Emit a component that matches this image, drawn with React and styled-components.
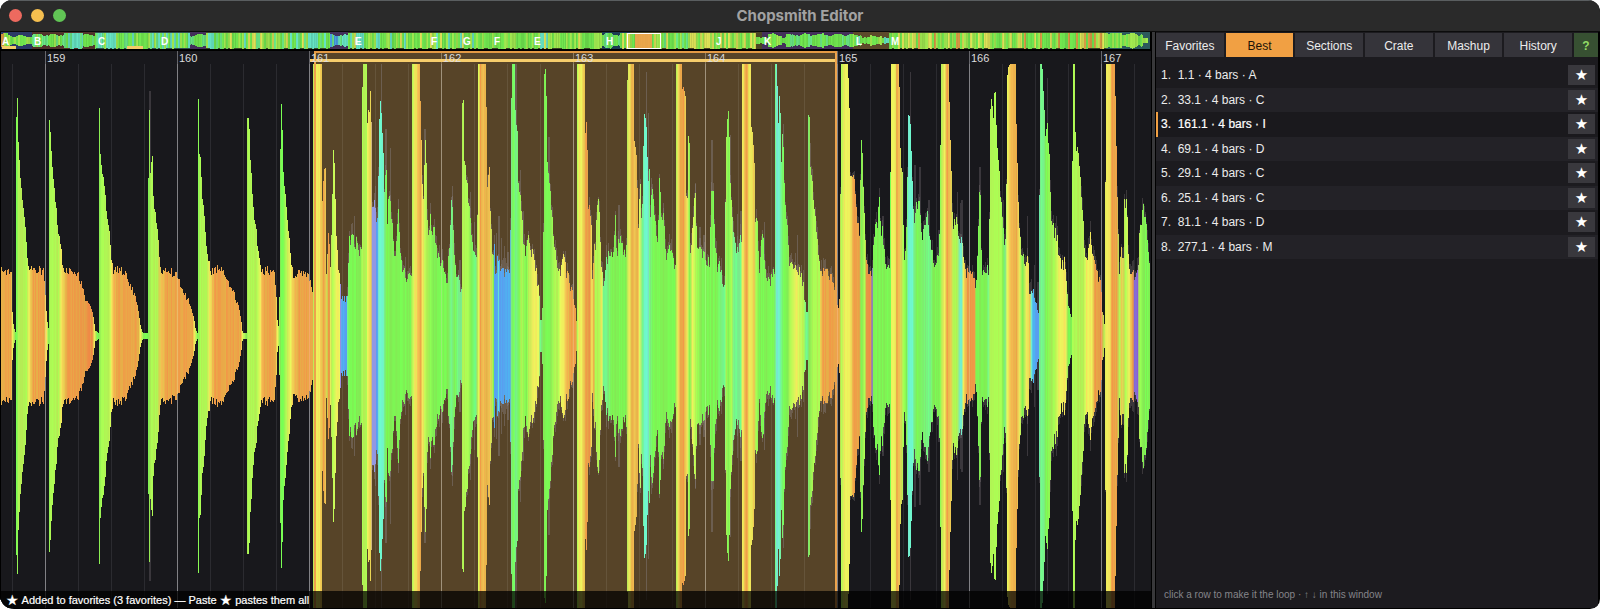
import React, { useState } from "react";
import styled, { createGlobalStyle } from "styled-components";

const GlobalStyle = createGlobalStyle`
  *, *::before, *::after { box-sizing: border-box; }
  body { margin: 0; background: #fff; font-family: "Liberation Sans", Arial, "DejaVu Sans", sans-serif; }
  button { font: inherit; color: inherit; border: 0; padding: 0; background: none; cursor: pointer; }
`;

const SPAN = 3453;
const HEIGHT = 557;
const MID = 285;
const FULL = 272;

// position, amplitude (0-100)
const ENVELOPE = [
  4,25, 33,23, 36,9, 40,3, 47,1, 48,60, 51,89, 54,89, 54,71, 60,59, 66,50, 72,43, 78,35, 82,27, 90,24, 95,25, 130,24, 133,17, 140,6, 145,2, 146,1,
  147,79, 150,74, 155,63, 162,55, 168,46, 176,37, 185,29, 190,24, 215,25, 235,22, 255,14, 270,11, 278,8, 285,2, 296,1,
  297,83, 300,68, 306,61, 315,52, 321,43, 327,38, 333,27, 340,24, 360,25, 380,22, 400,16, 412,11, 420,4, 427,1, 443,1,
  445,36, 447,83, 450,57, 456,65, 459,51, 465,45, 471,41, 477,30, 483,24, 500,25, 530,22, 552,16, 570,11, 580,7, 586,2, 593,1,
  594,87, 597,65, 601,66, 606,51, 612,45, 618,34, 625,28, 632,24, 655,25, 677,22, 700,16, 715,11, 722,6, 727,1, 740,1,
  741,12, 743,82, 746,82, 749,68, 754,57, 760,46, 768,38, 775,30, 785,23, 800,25, 822,23, 828,16, 831,6, 838,1,
  840,30, 843,86, 845,86, 847,63, 854,54, 860,45, 866,36, 872,28, 880,22, 905,24, 925,22, 938,17, 939,17,
  940,100, 963,100, 964,82, 967,35, 972,63, 975,63, 976,36, 980,9, 983,31, 986,38, 990,19, 994,34, 999,58, 1001,69, 1004,53, 1008,37, 1014,24, 1020,20,
  1021,14, 1041,14, 1044,19, 1047,35, 1058,38, 1064,32, 1070,37, 1076,32, 1085,33, 1087,81, 1089,100, 1098,100, 1100,74, 1105,83, 1107,74, 1110,89, 1112,89, 1114,67, 1117,40, 1121,50, 1127,50, 1130,32, 1134,46,
  1137,68, 1140,87, 1142,87, 1144,77, 1150,67, 1153,51, 1158,61, 1162,38, 1167,55, 1172,47, 1178,40, 1184,28, 1190,35, 1195,49, 1199,32, 1206,24, 1212,26, 1219,20, 1226,24, 1232,24, 1235,16,
  1236,100, 1257,100, 1261,82, 1266,59, 1272,44, 1275,72, 1277,72, 1280,50, 1284,33, 1290,44, 1296,38, 1302,41, 1310,31, 1320,28, 1330,26, 1337,21, 1343,23, 1349,36, 1355,52, 1360,37, 1366,26, 1375,22, 1385,17,
  1386,87, 1389,87, 1390,65, 1396,62, 1402,54, 1408,46, 1414,36, 1420,31, 1432,27, 1434,60, 1436,100, 1455,100, 1458,86, 1461,55, 1467,62, 1471,44, 1476,29, 1482,33, 1487,21, 1494,31, 1500,24, 1531,24,
  1534,76, 1536,100, 1542,100, 1546,77, 1552,76, 1555,46, 1560,53, 1566,42, 1574,29, 1582,38, 1590,32, 1600,31, 1608,24, 1616,16, 1620,6, 1625,6, 1630,13, 1633,98, 1637,98, 1640,65, 1647,56, 1656,44, 1665,32, 1675,24, 1685,26, 1692,32, 1698,24, 1710,20, 1722,15, 1729,4, 1732,3,
  1733,100, 1753,100, 1755,74, 1760,80, 1763,50, 1772,46, 1777,16, 1783,33, 1788,26, 1791,50, 1796,53, 1799,36, 1805,24, 1812,18, 1818,27, 1825,31, 1838,29, 1842,36, 1846,45, 1850,24, 1855,38, 1865,36, 1870,28, 1880,34,
  1881,82, 1884,100, 1900,100, 1902,72, 1908,68, 1915,36, 1921,57, 1925,28, 1930,65, 1934,82, 1937,82, 1940,70, 1944,51, 1947,62, 1950,40, 1956,53, 1962,47, 1969,34, 1975,37, 1979,57, 1984,41, 1990,44, 1996,29, 2008,34, 2020,28, 2028,28,
  2029,100, 2044,100, 2046,92, 2055,90, 2058,53, 2064,50, 2066,72, 2068,72, 2070,29, 2078,41, 2085,53, 2090,33, 2100,33, 2115,29, 2130,28, 2135,56, 2140,56, 2143,36, 2150,27, 2160,27, 2166,22, 2175,20,
  2178,67, 2184,82, 2186,82, 2189,60, 2195,46, 2200,40, 2208,33, 2215,34, 2225,37, 2227,100, 2250,100, 2252,78, 2258,74, 2262,63, 2265,41, 2271,44, 2278,22, 2283,33, 2288,40, 2294,24, 2308,20, 2320,24, 2326,24,
  2327,100, 2330,100, 2334,74, 2339,89, 2343,56, 2348,73, 2353,53, 2360,44, 2367,29, 2378,28, 2390,27, 2400,24, 2410,19, 2418,9, 2424,9, 2426,82, 2429,82, 2430,63, 2438,54, 2446,44, 2454,31, 2462,24, 2490,24, 2505,19, 2512,14, 2521,11,
  2523,100, 2543,100, 2547,84, 2550,60, 2562,58, 2570,46, 2580,33, 2583,71, 2585,71, 2588,57, 2592,45, 2597,32, 2602,24, 2618,24, 2622,35, 2628,45, 2633,37, 2638,53, 2642,37, 2646,40, 2652,31, 2660,27, 2671,22,
  2673,100, 2696,100, 2700,68, 2706,59, 2712,29, 2718,36, 2722,50, 2726,82, 2729,82, 2732,72, 2735,59, 2741,40, 2748,49, 2758,51, 2764,36, 2772,40, 2780,47, 2790,35, 2800,28, 2815,31, 2821,41,
  2823,100, 2845,100, 2848,80, 2853,62, 2858,37, 2868,45, 2876,37, 2885,35, 2890,26, 2905,24, 2918,24, 2926,19, 2932,26, 2935,36, 2938,53, 2940,53, 2944,26, 2955,24, 2968,26, 2971,84, 2975,87, 2980,74, 2983,91, 2985,91, 2989,72, 2998,59, 3004,46, 3012,37, 3018,35, 3020,58,
  3022,96, 3026,99, 3030,100, 3045,100, 3048,77, 3052,58, 3058,40, 3065,28, 3070,31, 3076,24, 3082,33, 3086,19, 3095,16, 3104,16, 3110,10, 3118,7, 3120,100, 3125,100, 3131,87, 3136,69, 3141,77, 3148,65, 3152,44, 3160,40, 3170,38, 3178,27, 3192,28, 3200,18, 3208,9, 3216,6,
  3218,64, 3220,100, 3223,100, 3226,65, 3233,69, 3240,58, 3248,46, 3255,28, 3265,32, 3272,37, 3280,27, 3290,24, 3300,22, 3308,9, 3315,1, 3317,58, 3319,100, 3343,100, 3347,77, 3352,46, 3357,22, 3364,32, 3370,24, 3374,50, 3380,50, 3384,29, 3392,22, 3405,24, 3415,26, 3418,36, 3425,44, 3430,48, 3438,44, 3443,35, 3448,24, 3453,24,
];

const INK = {
  k: [196, 96, 128], p: [138, 98, 212], v: [146, 150, 226], b: [84, 168, 240], c: [114, 240, 206], m: [118, 243, 140],
  g: [126, 244, 84], l: [176, 246, 84], y: [240, 238, 92], a: [240, 198, 82], o: [236, 164, 72], r: [234, 146, 70],
};

// spectral colour: position + ink, blended from one mark to the next
const SPECTRUM = "4o 34o 38y 47g 51g 56l 80l 88y 92a 100o 134o 140y 147g 152l 176l 184y 192a 200o 278r 284y 292g 297g 306l 327l 335y 341a 350o 416o 422y 432g 446g 454l 472l 484a 500o 578o 584y 594g 601l 620l 630y 636a 645o 722o 727y 740g 744l 770l 782y 786a 795o 826o 833y 841g 850g 858l 872y 882a 895o 938o 940l 944a 948y 960y 963a 972o 979a 981l 984o 990r 991y 996l 1010y 1019y 1020k 1022v 1026b 1041b 1043m 1048g 1082g 1086l 1100l 1103y 1114a 1117v 1128v 1130b 1134b 1136c 1150c 1154m 1160g 1200g 1232g 1236l 1245y 1256a 1262o 1268y 1280l 1300g 1345g 1355m 1365g 1375m 1386m 1388l 1405l 1414g 1428m 1433l 1437y 1442o 1450a 1460o 1470a 1478l 1481g 1484b 1493b 1495c 1498b 1531b 1534m 1540g 1548m 1558g 1564l 1580g 1585l 1600y 1616y 1621m 1631g 1650g 1664l 1675l 1682y 1692y 1699a 1710o 1728o 1732l 1737y 1745y 1751a 1758o 1770r 1776y 1782o 1787l 1798l 1806y 1811m 1820m 1835g 1879g 1882l 1888y 1896o 1904a 1912o 1918y 1928m 1935c 1945c 1949m 1960g 2026g 2029l 2035y 2041o 2052o 2062y 2070g 2078y 2088l 2105g 2150g 2170m 2176m 2178l 2185g 2195l 2202m 2222m 2228y 2240o 2250y 2262a 2268l 2278g 2322g 2327m 2330c 2338c 2344m 2352g 2364g 2370l 2390y 2412l 2418m 2425m 2427g 2440l 2460l 2462a 2470o 2510o 2518o 2523l 2535y 2550y 2562o 2578o 2584g 2594l 2601r 2612r 2617p 2621g 2672g 2675y 2686y 2690o 2698a 2710l 2720g 2726c 2738c 2742m 2752g 2790m 2800g 2820g 2824l 2834y 2842o 2852a 2862l 2872l 2881c 2886c 2890y 2896a 2904r 2924o 2929g 2960g 2965m 2971l 3004l 3010g 3016m 3022y 3032a 3050o 3058y 3068g 3080y 3090a 3095c 3099b 3116b 3120m 3132m 3138g 3165l 3178y 3198y 3205g 3216g 3218l 3250l 3260y 3276y 3284o 3305r 3313l 3318y 3330y 3336o 3350o 3358l 3366a 3376l 3388y 3400r 3404p 3414p 3417l 3430g 3453g"
  .split(" ")
  .map((s) => [parseInt(s, 10), INK[s.slice(-1)]]);

// faint peaks behind the coloured body
const GHOSTS = [[448, 90], [1061, 44], [1125, 55], [1142, 100], [1156, 76], [1169, 69], [1215, 29], [1273, 76], [1290, 49], [1356, 55], [1378, 28], [1409, 53], [1422, 42], [1488, 38], [1495, 44], [1503, 36], [1512, 33], [1522, 31], [1546, 100], [1560, 61], [1568, 46], [1645, 73], [1855, 48], [1937, 97], [1943, 82], [1953, 58], [1988, 49], [2085, 56], [2098, 40], [2110, 37], [2134, 72], [2190, 74], [2211, 45], [2221, 46], [2292, 42], [2349, 78], [2391, 37], [2430, 71], [2647, 44], [2730, 97], [2743, 63], [2758, 62], [2785, 50], [2814, 39], [2871, 53], [2879, 49], [2884, 50], [2938, 62], [3008, 50], [3080, 44], [3101, 26], [3112, 20], [3140, 95], [3168, 44], [3434, 45]];

const hash = (n) => {
  const s = Math.sin(n * 127.1 + 11.7) * 43758.5453;
  return s - Math.floor(s);
};

function ampAt(x) {
  let i = 2;
  while (i < ENVELOPE.length - 2 && ENVELOPE[i] <= x) i += 2;
  const [x0, a0, x1, a1] = ENVELOPE.slice(i - 2, i + 2);
  const t = x1 === x0 ? 1 : Math.max(0, Math.min(1, (x - x0) / (x1 - x0)));
  return a0 + (a1 - a0) * t;
}

function inkAt(x, n) {
  let i = 1;
  while (i < SPECTRUM.length - 1 && SPECTRUM[i][0] <= x) i += 1;
  const [x0, c0] = SPECTRUM[i - 1];
  const [x1, c1] = SPECTRUM[i];
  const t = Math.max(0, Math.min(1, (x - x0) / (x1 - x0)));
  const wobble = (hash(n) - 0.5) * 24;
  return `rgb(${c0.map((v, k) => Math.round(Math.min(255, v + (c1[k] - v) * t + (k === 1 ? wobble : k === 0 ? -wobble / 2 : 0)))).join(",")})`;
}

const BARS = [];
for (let x = 4; x < SPAN - 3; x += 3) {
  const n = x;
  let amp = Math.max(ampAt(x - 1), ampAt(x), ampAt(x + 1));
  if (amp < 99 && amp > 12) amp += 1.4 - hash(n + 5) * (x > 1040 && amp < 60 ? 5 : 3.2);
  BARS.push({ x, h: (amp / 100) * FULL, ghost: x > 1040 && amp > 14 && amp < 60 ? hash(n + 9) * 12 : 0, fill: inkAt(x + 1, n) });
}

const FIRST_BAR = 135;
const BAR_PITCH = 396;
const LOOP = { start: 942, end: 2511 };
const BAR_LABELS = [159, 160, 161, 162, 163, 164, 165, 166, 167];
const BEATS = Array.from({ length: 35 }, (_, i) => 36 + i * 99);
const ghostOpacity = (x) => (x > LOOP.start && x < LOOP.end ? 0.42 : 0.3);

function Waveform() {
  return (
    <Canvas viewBox={`0 0 ${SPAN} ${HEIGHT}`} preserveAspectRatio="none" role="img" aria-label="Waveform, bars 159 to 167">
      <rect x={LOOP.start} y="1" width={LOOP.end - LOOP.start} height={HEIGHT} fill="#574428" />
      {BEATS.map((x, i) => {
        const inLoop = x > LOOP.start && x < LOOP.end;
        const bar = i % 4 === 1;
        return <rect key={x} x={x - 1} y={bar ? 0 : 13} width="3" height={HEIGHT} fill={bar ? (inLoop ? "#8b7a60" : "#66666b") : inLoop ? "#65543a" : "#2b2b30"} />;
      })}
      <rect x={LOOP.start - 12} y="8" width={LOOP.end - LOOP.start + 9} height="3" fill="#f6cd6c" />
      {BARS.map((b) => b.ghost > 0 && <rect key={b.x} x={b.x} y={MID - b.h - b.ghost} width="3" height={(b.h + b.ghost) * 2} fill="#8a8080" opacity={ghostOpacity(b.x)} />)}
      {GHOSTS.map(([x, a]) => <rect key={x} x={x} y={MID - a * 2.72} width="4" height={a * 5.44} fill="#8a8288" opacity={ghostOpacity(x)} />)}
      {BARS.map((b) => <rect key={b.x} x={b.x} y={MID - b.h} width="3" height={b.h * 2} fill={b.fill} />)}
      {BEATS.filter((_, i) => i % 4 === 1).map((x) => <rect key={x} x={x - 1} y="13" width="3" height={HEIGHT} fill="#fff" opacity="0.18" />)}
      <rect x={LOOP.start} y="1" width="5" height={HEIGHT} fill="#eda34c" />
      <rect x={LOOP.end - 6} y="1" width="6" height={HEIGHT} fill="#eda34c" />
      <rect x={LOOP.start} y="0" width={LOOP.end - LOOP.start} height="2" fill="#e39a45" />
      <rect x="0" y="0" width="3" height={HEIGHT} fill="#000" />
    </Canvas>
  );
}

/* ---------- song overview ---------- */
const ZONES = [
  [1, 32, "#2b3a66"], [32, 95, "#50332b"], [95, 190, "#30504c"], [190, 206, "#43305a"], [206, 330, "#3a4a2a"], [330, 348, "#43305a"], [348, 602, "#3b4224"],
  [602, 630, "#1d3c52"], [630, 762, "#4a4424"], [762, 853, "#43305a"], [853, 890, "#5c4a2a"], [890, 1106, "#3b4224"], [1106, 1150, "#2c5a5c"],
];
const SECTION_MARKS = [["A", 2], ["B", 34], ["C", 98], ["D", 161], ["E", 355], ["F", 431], ["G", 463], ["F", 494], ["E", 534], ["H", 606], ["J", 716], ["K", 764], ["L", 856], ["M", 891]];
// start, level, ink palette
const LOUDNESS = [[1, 0.78, "lgo"], [10, 0.6, "glg"], [32, 0.7, "gml"], [64, 0.94, "mcgc"], [83, 0.68, "ggm"], [95, 0.96, "mgcgcl"], [190, 0.68, "mg"], [206, 0.97, "lygymgc"], [310, 0.94, "gmcg"], [330, 0.68, "mbc"], [348, 0.97, "lgylgcg"], [602, 0.79, "gm"], [620, 0.97, "lgy"], [635, 0.97, "o"], [652, 0.97, "gmly"], [700, 0.97, "gly"], [756, 0.45, "g"], [768, 0.72, "ggl"], [782, 0.4, "gm"], [786, 0.72, "ggm"], [853, 0.66, "glc"], [862, 0.4, "mg"], [870, 0.56, "gl"], [882, 0.35, "gc"], [889, 0.97, "lgylyog"], [960, 0.97, "glgy"], [1010, 0.97, "lgygo"], [1104, 0.88, "gl"], [1122, 0.79, "gl"], [1143, 0.35, "l"], [1148, 0.06, "l"]];
const OVERVIEW = [];
for (let x = 1; x < 1149; x += 1) {
  const [, level, palette] = LOUDNESS.filter(([s]) => s <= x).pop();
  const block = Math.floor(x / 2);
  const slow = level < 0.8 ? 0.16 * Math.sin(x / 2.6) * level : 0;
  const h = Math.min(8, (level + slow - hash(block) * 0.14) * 9);
  const ink = INK[palette[Math.floor(hash(block + 400) * palette.length)]];
  OVERVIEW.push({ x, h, fill: `rgb(${ink.map((v, k) => Math.round(v * (0.84 + hash(x + 70) * 0.12) - (k === 0 ? 6 : 0))).join(",")})` });
}

function OverviewArt() {
  return (
    <Canvas viewBox="0 0 1151 17" preserveAspectRatio="none" aria-hidden="true">
      {ZONES.map(([a, b, fill]) => <rect key={a} x={a} width={b - a} y="0" height="17" fill={fill} />)}
      {OVERVIEW.map((b) => <rect key={b.x} x={b.x} y={8.5 - b.h} width="1" height={b.h * 2} fill={b.fill} />)}
      <rect x="635" y="1" width="17" height="15" fill="#efaa4e" opacity="0.8" />
      <rect x="2" y="14" width="14" height="3" fill="#f3cb68" />
      <rect x="127" y="14" width="16" height="3" fill="#f3cb68" />
      <rect x="627" y="1" width="33" height="15" fill="none" stroke="#fff" />
    </Canvas>
  );
}

/* ---------- styled parts ---------- */
const Window = styled.div`
  display: flex;
  flex-direction: column;
  min-height: 100vh;
  overflow: hidden;
  border-radius: 12px 12px 10px 14px;
  background: #000;
`;
const TitleBar = styled.header`
  display: grid;
  grid-template-columns: 1fr auto 1fr;
  align-items: center;
  height: 32px;
  padding: 0 9px 1px;
  background: #2a2a2a;
  border-top: 1px solid #5a5e60;
  border-bottom: 1px solid #0c0c0c;
`;
const Lights = styled.div`
  display: flex;
  gap: 9px;
`;
const Light = styled.button`
  width: 13px;
  height: 13px;
  border-radius: 50%;
  background: ${(p) => p.$color};
`;
const Title = styled.h1`
  margin: 0;
  font: 700 15px/20px Inter, "Liberation Sans", sans-serif;
  color: #a2a2a2;
`;
const Main = styled.main`
  flex: 1;
  display: grid;
  grid-template-columns: minmax(0, 1fr) 4px 445px;
  padding-bottom: 1px;
`;
const Editor = styled.section`
  display: flex;
  flex-direction: column;
  gap: 2px;
  background: #000;
`;
const Strip = styled.div`
  position: relative;
  height: 17px;
`;
const Stage = styled.div`
  position: relative;
  flex: 1;
  display: flex;
  flex-direction: column;
  justify-content: flex-end;
  min-height: 320px;
  background: #18181c;
`;
const Canvas = styled.svg`
  position: absolute;
  inset: 0;
  width: 100%;
  height: 100%;
  shape-rendering: crispEdges;
`;
const Mark = styled.span`
  position: absolute;
  top: ${(p) => (p.$bold ? 4 : 1)}px;
  left: ${(p) => p.$at}%;
  font-size: ${(p) => (p.$bold ? 10 : 11)}px;
  font-weight: ${(p) => (p.$bold ? 700 : 400)};
  line-height: 12px;
  color: ${(p) => (p.$bold ? "#fff" : "#dcdcdc")};
`;
const Status = styled.p`
  position: relative;
  display: flex;
  gap: 3px;
  margin: 0;
  padding: 1px 6px 0;
  height: 17px;
  background: rgba(0, 0, 0, 0.74);
  color: #fff;
  font-size: 11px;
  line-height: 17px;
  white-space: nowrap;
  -webkit-text-stroke: 0.2px #fff;
`;
const StatusStar = styled.span`
  font: 14px/16px "DejaVu Sans", sans-serif;
`;
const Splitter = styled.div`
  border-left: 1px solid #000;
  background: #38383a;
`;
const Panel = styled.aside`
  display: flex;
  flex-direction: column;
  margin: 0 2px 0 1px;
  background: #1c1b1f;
  color: #ececec;
  font-size: 12px;
`;
const Tabs = styled.nav`
  display: flex;
  gap: 2px;
  padding-top: 1px;
`;
const Tab = styled.button`
  flex: 1;
  height: 24px;
  padding-top: 2px;
  background: ${(p) => (p.$active ? "#f1a043" : "#35343a")};
  color: ${(p) => (p.$active ? "#1c1408" : "#ececec")};
`;
const HelpTab = styled.button`
  flex: 0 0 24px;
  height: 24px;
  padding-top: 2px;
  background: #375032;
  color: #92dc66;
  font-weight: 700;
`;
const List = styled.ol`
  display: grid;
  grid-auto-rows: 1fr;
  height: 196px;
  margin: 6px 0 0;
  padding: 0;
  list-style: none;
`;
const Row = styled.li`
  display: flex;
  align-items: center;
  padding-right: 3px;
  border-left: 2px solid ${(p) => (p.$active ? "#f1a043" : "transparent")};
  background: ${(p) => (p.$active ? "#1a191d" : "transparent")};
  color: ${(p) => (p.$active ? "#fff" : "#ececec")};
  &:nth-child(even) { background: #232227; }
`;
const RowLink = styled.button`
  flex: 1;
  align-self: stretch;
  padding-left: 3px;
  text-align: left;
  white-space: pre;
  -webkit-text-stroke: ${(p) => (p.$active ? "0.2px #fff" : "0")};
`;
const Star = styled.button`
  width: 27px;
  height: 20px;
  background: #39383d;
  color: #fff;
  font: 15px/20px "DejaVu Sans", sans-serif;
`;
const Hint = styled.p`
  margin: auto 0 0;
  padding: 0 8px 7px;
  color: #85858a;
  font-size: 10px;
  line-height: 12px;
`;

const TABS = ["Favorites", "Best", "Sections", "Crate", "Mashup", "History"];
const LOOPS = ["1.1 · 4 bars · A", "33.1 · 4 bars · C", "161.1 · 4 bars · I", "69.1 · 4 bars · D", "29.1 · 4 bars · C", "25.1 · 4 bars · C", "81.1 · 4 bars · D", "277.1 · 4 bars · M"];

export default function App() {
  const [tab, setTab] = useState("Best");
  const [selected, setSelected] = useState(2);
  return (
    <>
      <GlobalStyle />
      <Window>
        <TitleBar>
          <Lights>
            <Light $color="#ed6a5f" aria-label="Close" />
            <Light $color="#f5bf4f" aria-label="Minimize" />
            <Light $color="#61c555" aria-label="Zoom" />
          </Lights>
          <Title>Chopsmith Editor</Title>
        </TitleBar>
        <Main>
          <Editor>
            <Strip>
              <OverviewArt />
              {SECTION_MARKS.map(([name, x]) => <Mark key={x} $bold $at={(x / 1151) * 100}>{name}</Mark>)}
            </Strip>
            <Stage>
              <Waveform />
              {BAR_LABELS.map((n, i) => <Mark key={n} $at={((FIRST_BAR + i * BAR_PITCH + 6) / SPAN) * 100}>{n}</Mark>)}
              <Status>
                <StatusStar>★</StatusStar>
                Added to favorites (3 favorites) — Paste
                <StatusStar>★</StatusStar>
                pastes them all
              </Status>
            </Stage>
          </Editor>
          <Splitter />
          <Panel>
            <Tabs>
              {TABS.map((t) => <Tab key={t} $active={t === tab} onClick={() => setTab(t)}>{t}</Tab>)}
              <HelpTab aria-label="Help">?</HelpTab>
            </Tabs>
            <List>
              {LOOPS.map((text, i) => (
                <Row key={text} $active={i === selected}>
                  <RowLink $active={i === selected} onClick={() => setSelected(i)}>{`${i + 1}.  ${text}`}</RowLink>
                  <Star aria-label={`Favorite loop ${i + 1}`}>★</Star>
                </Row>
              ))}
            </List>
            <Hint>click a row to make it the loop · ↑ ↓ in this window</Hint>
          </Panel>
        </Main>
      </Window>
    </>
  );
}
